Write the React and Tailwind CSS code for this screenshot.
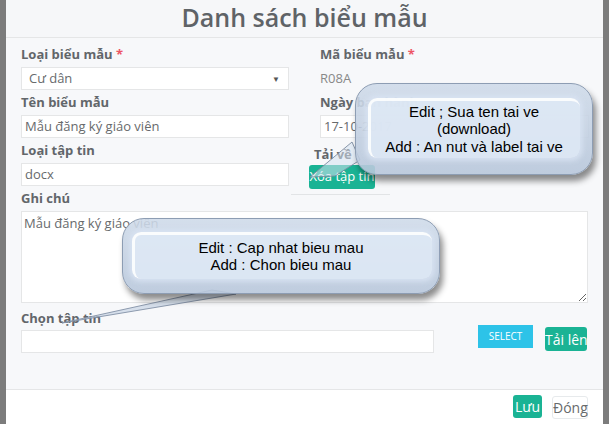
import React from 'react';

const LABEL = "block h-[18px] leading-[18px] text-[13px] font-bold text-[#62666a] whitespace-nowrap";
const INPUT = "h-[23px] w-full border border-[#e5e6e7] bg-white px-[3px] text-[13px] leading-[21px] text-[#676a6c] whitespace-nowrap overflow-hidden";

function Req() {
  return <span className="text-[#ed5565]"> *</span>;
}

function Bubble({ className, innerClass, children }) {
  return (
    <div
      className={`absolute rounded-[22px] border border-[#8d9db3] bg-[linear-gradient(to_bottom,rgba(206,218,233,0.88),rgba(184,199,219,0.9))] shadow-[3px_6px_6px_rgba(0,0,0,0.45)] ${className}`}
    >
      <div
        className={`absolute rounded-[9px] border-t-[3px] border-l-[3px] border-[rgba(255,255,255,0.85)] bg-[rgba(222,232,245,0.88)] shadow-[0_0_5px_3px_rgba(216,227,242,0.85)] ${innerClass}`}
      />
      <div className="relative h-full flex items-center justify-center text-center font-['Liberation_Sans',Arial,sans-serif] text-[15px] leading-[17.5px] text-black">
        <div>{children}</div>
      </div>
    </div>
  );
}

export default function App() {
  return (
    <div className="relative w-[609px] h-[424px] overflow-hidden bg-[#7c7c7c] font-['Open_Sans',sans-serif]">
      <div className="ml-[6px] w-[597px] h-full flex flex-col bg-[#f7f8fa]">
        {/* header */}
        <div className="h-[38px] shrink-0 border-b border-[#e5e6e7] bg-[#f6f7f9] flex items-center justify-center">
          <h2 className="text-[25px] font-semibold leading-none text-[#5f6367] -mt-[2px]">Danh sách biểu mẫu</h2>
        </div>

        {/* body */}
        <div className="h-[351px] shrink-0 px-[15px] pt-[7px]">
          <div className="grid grid-cols-[268px_269px] gap-x-[31px]">
            <div>
              <label className={`${LABEL} mb-[4px]`}>Loại biểu mẫu<Req /></label>
              <div className={`${INPUT} !px-[7px] flex items-center justify-between`}>
                <span>Cư dân</span>
                <span className="text-[8px] text-[#555] pr-[1px]">▼</span>
              </div>
            </div>
            <div>
              <label className={`${LABEL} mb-[4px]`}>Mã biểu mẫu<Req /></label>
              <div className="h-[23px] flex items-center text-[13px] text-[#888]">R08A</div>
            </div>

            <div className="mt-[3px]">
              <label className={`${LABEL} mb-[4px]`}>Tên biểu mẫu</label>
              <div className={INPUT}>Mẫu đăng ký giáo viên</div>
            </div>
            <div className="mt-[3px]">
              <label className={`${LABEL} mb-[4px]`}>Ngày ban hành</label>
              <div className={INPUT}>17-10-2017</div>
            </div>

            <div className="mt-[3px]">
              <label className={`${LABEL} mb-[4px]`}>Loại tập tin</label>
              <div className={INPUT}>docx</div>
            </div>
            <div className="mt-[3px] h-[45px]">
              <label className={`${LABEL} -ml-[6px] pt-[4px] h-[22px]`}>Tải về</label>
              <button className="-ml-[11px] h-[24px] w-[66px] rounded-[3px] bg-[#1ab394] text-[13px] text-white whitespace-nowrap">
                Xóa tập tin
              </button>
              <div className="-ml-[29px] mt-[5px] h-px w-[99px] bg-[#e2e4e6]" />
            </div>
          </div>

          <label className={`${LABEL} mt-[3px] mb-[4px]`}>Ghi chú</label>
          <textarea
            readOnly
            defaultValue="Mẫu đăng ký giáo viên"
            className="block h-[92px] w-[567px] border border-[#e5e6e7] bg-white px-[2px] py-[2px] text-[13px] leading-[18px] text-[#676a6c] outline-none"
          />

          <label className={`${LABEL} mt-[6px]`}>Chọn tập tin</label>
          <div className="-mt-[2px] flex items-start">
            <div className="mt-[5px] h-[23px] w-[413px] border border-[#e5e6e7] bg-white" />
            <button className="ml-[44px] h-[23px] w-[55px] bg-[#2dc3e8] text-[10px] text-white">SELECT</button>
            <button className="ml-[12px] mt-[2px] h-[24px] w-[42px] rounded-[3px] bg-[#1ab394] text-[14px] text-white whitespace-nowrap">
              Tải lên
            </button>
          </div>
        </div>

        {/* footer */}
        <div className="flex-1 border-t border-[#e5e6e7] bg-white flex justify-end items-start gap-[10px] pr-[15px] pt-[5px]">
          <button className="h-[23px] w-[29px] rounded-[3px] bg-[#1ab394] text-[14px] text-white">Lưu</button>
          <button className="mt-[1px] h-[23px] w-[36px] rounded-[3px] border border-[#e7eaec] bg-white text-[14px] text-[#676a6c]">Đóng</button>
        </div>
      </div>

      {/* callout tails */}
      <svg className="absolute inset-0 pointer-events-none" width="609" height="424">
        <polygon points="352,142 310,177 335,176 360,160" fill="rgba(214,225,240,0.55)" stroke="#7c8ba0" strokeWidth="0.9" />
        <polygon points="212,290 62,323 236,294" fill="rgba(200,212,228,0.7)" stroke="#8291a6" strokeWidth="0.9" />
      </svg>

      <Bubble
        className="left-[355px] top-[83px] w-[238px] h-[92px]"
        innerClass="left-[12px] right-[12px] top-[14px] bottom-[16px]"
      >
        Edit ; Sua ten tai ve
        <br />
        (download)
        <br />
        Add : An nut và label tai ve
      </Bubble>

      <Bubble
        className="left-[122px] top-[218px] w-[318px] h-[76px]"
        innerClass="left-[9px] right-[7px] top-[13px] bottom-[14px]"
      >
        Edit : Cap nhat bieu mau
        <br />
        Add : Chon bieu mau
      </Bubble>
    </div>
  );
}
